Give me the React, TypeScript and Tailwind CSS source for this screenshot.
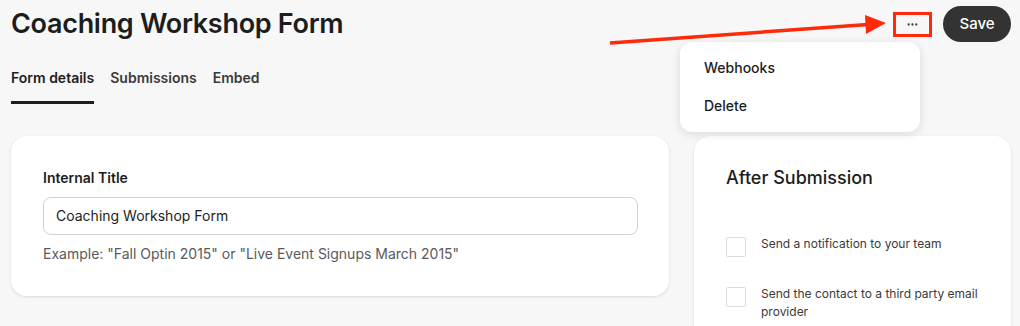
import { MoreHorizontal } from 'lucide-react';

const tabs = ['Form details', 'Submissions', 'Embed'];

const afterOptions = [
  'Send a notification to your team',
  'Send the contact to a third party email provider',
];

const Header = () => (
  <div className="flex h-[48px] items-center justify-between">
    <h1 className="text-[27px] leading-[32px] font-semibold tracking-[-0.3px] text-[#1d1d1d]">
      Coaching Workshop Form
    </h1>
    <div className="flex items-center gap-[11px]">
      <button className="flex h-[25px] w-[39px] items-center justify-center border-[3px] border-[#ff2a0a] text-[#444]">
        <MoreHorizontal size={13} strokeWidth={2.25} />
      </button>
      <button className="h-[36px] w-[68px] rounded-full bg-[#333333] text-[15px] font-medium text-white">
        Save
      </button>
    </div>
  </div>
);

const Tabs = () => (
  <div className="mt-[20px] flex gap-[16px]">
    {tabs.map((tab, i) => (
      <div
        key={tab}
        className={`border-b-[3px] pb-[13px] text-sm leading-5 font-semibold ${
          i === 0 ? 'border-[#1d1d1d] text-[#1d1d1d]' : 'border-transparent text-[#3a3a3a]'
        }`}
      >
        {tab}
      </div>
    ))}
  </div>
);

const DetailsCard = () => (
  <div className="h-[160px] rounded-2xl bg-white px-8 pt-8 shadow-[0_1px_3px_rgba(0,0,0,0.12)]">
    <label className="block text-sm leading-5 font-semibold text-[#1d1d1d]">Internal Title</label>
    <div className="mt-[9px] flex h-[38px] w-[595px] items-center rounded-lg border border-[#d2d2d2] px-[12px] text-sm text-[#1d1d1d]">
      Coaching Workshop Form
    </div>
    <p className="mt-[9px] text-sm leading-5 text-[#5a5a5a]">
      Example: "Fall Optin 2015" or "Live Event Signups March 2015"
    </p>
  </div>
);

const AfterSubmissionCard = () => (
  <div className="h-[220px] rounded-2xl bg-white px-8 pt-[28px] shadow-[0_1px_3px_rgba(0,0,0,0.12)]">
    <h2 className="text-lg leading-7 font-medium text-[#1d1d1d]">After Submission</h2>
    <div className="mt-[43px] flex flex-col gap-[28px]">
      {afterOptions.map((opt) => (
        <div key={opt} className="flex items-start gap-[15px]">
          <div className="mt-[2px] h-[20px] w-[20px] shrink-0 rounded-[2px] border border-[#dcdcdc] bg-white" />
          <span className="w-[222px] text-xs leading-[18px] text-[#3a3a3a]">{opt}</span>
        </div>
      ))}
    </div>
  </div>
);

export default function App() {
  return (
    <div
      className="relative h-[326px] w-[1020px] overflow-hidden bg-[#f7f7f7] pr-[9px] pl-[11px]"
      style={{ fontFamily: 'Inter, "Noto Sans", sans-serif' }}
    >
      <Header />
      <Tabs />
      <div className="mt-[32px] grid grid-cols-[658px_317px] gap-[25px]">
        <DetailsCard />
        <AfterSubmissionCard />
      </div>

      {/* dropdown menu */}
      <div className="absolute top-[42px] left-[680px] h-[90px] w-[240px] rounded-xl bg-white px-[24px] py-[16px] shadow-[0_2px_10px_rgba(0,0,0,0.12)]">
        <div className="text-sm leading-5 font-medium text-[#1d1d1d]">Webhooks</div>
        <div className="mt-[18px] text-sm leading-5 font-medium text-[#1d1d1d]">Delete</div>
      </div>

      {/* annotation arrow */}
      <svg className="absolute top-0 left-0" width="1020" height="60" viewBox="0 0 1020 60">
        <line x1="610" y1="43" x2="868" y2="24.5" stroke="#ff2a0a" strokeWidth="3.5" />
        <polygon points="865,15 886,23 866,34" fill="#ff2a0a" />
      </svg>
    </div>
  );
}
